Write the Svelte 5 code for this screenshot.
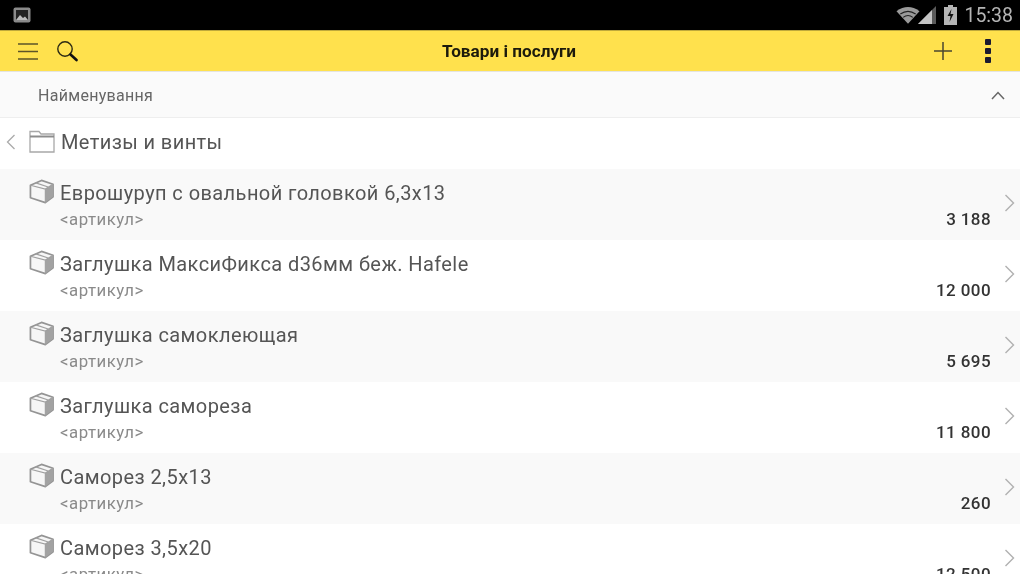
<script lang="ts">
  const items = [
    { name: 'Еврошуруп с овальной головкой 6,3х13', qty: '3 188' },
    { name: 'Заглушка МаксиФикса d36мм беж. Hafele', qty: '12 000' },
    { name: 'Заглушка самоклеющая', qty: '5 695' },
    { name: 'Заглушка самореза', qty: '11 800' },
    { name: 'Саморез 2,5х13', qty: '260' },
    { name: 'Саморез 3,5х20', qty: '12 500' }
  ];
</script>

<div class="screen">
  <div class="status">
    <svg class="gallery" width="18" height="16" viewBox="0 0 18 16">
      <rect x="0.5" y="0.5" width="17" height="15" rx="2" fill="#8a8a8a" />
      <rect x="3" y="3" width="12" height="10" fill="#222" />
      <path d="M3 13 L7 8 L10 11 L12 9.5 L15 13 Z" fill="#bbb" />
    </svg>
    <div class="status-right">
      <svg width="24" height="18" viewBox="0 0 25 18">
        <path d="M0.5 5 Q12.5 -3.5 24.5 5 L12.5 18 Z" fill="#9a9a9a" />
        <path d="M4.5 8 Q12.5 2.5 20.5 8" fill="none" stroke="#222" stroke-width="1.2" />
        <path d="M7.5 11.5 Q12.5 7.5 17.5 11.5" fill="none" stroke="#222" stroke-width="1.2" />
      </svg>
      <svg class="signal" width="18" height="18" viewBox="0 0 18 18">
        <path d="M18 0 V18 H0 Z" fill="#5a5a5a" />
        <path d="M14 4 V18 H0 Z" fill="#c4c4c4" />
      </svg>
      <svg class="battery" width="13" height="20" viewBox="0 0 13 20">
        <path d="M4 0 H9 V2 H13 V20 H0 V2 H4 Z" fill="#b5b5b5" />
        <path d="M7.5 4 L3.5 11 H6.5 L5.5 17 L9.5 9 H6.5 Z" fill="#111" />
      </svg>
      <span class="clock">15:38</span>
    </div>
  </div>

  <header class="toolbar">
    <div class="tools">
      <svg width="20" height="19" viewBox="0 0 20 19">
        <path d="M0 2 H20 M0 9.5 H20 M0 17 H20" stroke="#5c5428" stroke-width="1.4" />
      </svg>
      <svg width="22" height="22" viewBox="0 0 22 22">
        <circle cx="9" cy="9" r="7.2" fill="none" stroke="#2c2a14" stroke-width="1.4" />
        <path d="M14.5 14.5 L20.5 20" stroke="#111" stroke-width="2.6" stroke-linecap="round" />
      </svg>
    </div>
    <h1>Товари і послуги</h1>
    <div class="actions">
      <svg width="18" height="18" viewBox="0 0 18 18">
        <path d="M9 0 V18 M0 9 H18" stroke="#4a4630" stroke-width="1.5" />
      </svg>
      <div class="dots"><i></i><i></i><i></i></div>
    </div>
  </header>

  <div class="sort">
    <span>Найменування</span>
    <svg width="14" height="9" viewBox="0 0 14 9">
      <path d="M1 8 L7 1.5 L13 8" fill="none" stroke="#666" stroke-width="1.5" />
    </svg>
  </div>

  <div class="folder">
    <svg class="back" width="10" height="16" viewBox="0 0 10 16">
      <path d="M8.5 1 L1.5 8 L8.5 15" fill="none" stroke="#aaa" stroke-width="1.3" />
    </svg>
    <svg class="folder-icon" width="26" height="23" viewBox="0 0 26 23">
      <path d="M1 22 V1.5 H10 L12 4 H25 V22 Z" fill="#fff" stroke="#a8a8a8" stroke-width="1.3" />
      <path d="M1 6.5 H25" stroke="#8c8c8c" stroke-width="2" />
    </svg>
    <span>Метизы и винты</span>
  </div>

  {#each items as item, i}
    <div class="row" class:shaded={i % 2 === 0}>
      <svg class="box" width="25" height="25" viewBox="0 0 26 25">
        <path d="M1.5 6 L13 1 L25 5 V18 L17 24 L1.5 19 Z" fill="#f6f6f6" stroke="#949494" stroke-width="1.8" stroke-linejoin="round" />
        <path d="M17 10 L25 5 V18 L17 24 Z" fill="#a2a2a2" />
        <path d="M1.5 6 L17 10 L25 5 M17 10 V24 M7 3.5 L20 7.8" fill="none" stroke="#a0a0a0" stroke-width="1.2" />
      </svg>
      <div class="text">
        <div class="name">{item.name}</div>
        <div class="code">&lt;артикул&gt;</div>
      </div>
      <div class="qty">{item.qty}</div>
      <svg class="chevron" width="11" height="18" viewBox="0 0 11 18">
        <path d="M1.5 1 L9.5 9 L1.5 17" fill="none" stroke="#b0b0b0" stroke-width="1.4" />
      </svg>
    </div>
  {/each}
</div>

<style>
  :global(body) {
    margin: 0;
    background: #fff;
    overflow: hidden;
  }
  .screen {
    width: 1020px;
    height: 574px;
    overflow: hidden;
    font-family: Roboto, "Liberation Sans", sans-serif;
    filter: blur(0.4px);
  }
  .status {
    height: 30px;
    background: #000;
    display: flex;
    align-items: center;
    justify-content: space-between;
    padding: 0 7px 0 13px;
  }
  .status-right {
    display: flex;
    align-items: center;
    color: #b5b5b5;
    font-size: 19.5px;
  }
  .signal {
    margin-left: -2px;
    margin-right: 8px;
  }
  .clock {
    margin-left: 7px;
  }
  .toolbar {
    height: 42px;
    background: #ffe14d;
    border-top: 1px solid #bfa93c;
    border-bottom: 1px solid #e4e4e0;
    box-sizing: border-box;
    display: flex;
    align-items: center;
    justify-content: space-between;
    padding: 0 29px 0 18px;
  }
  .tools {
    display: flex;
    align-items: center;
    gap: 18px;
  }
  h1 {
    flex: 1;
    margin: 0;
    padding-left: 6px;
    text-align: center;
    font-size: 17.2px;
    font-weight: 700;
    color: #1c1a0c;
  }
  .actions {
    display: flex;
    align-items: center;
    gap: 33px;
  }
  .dots {
    display: flex;
    flex-direction: column;
    gap: 3px;
  }
  .dots i {
    width: 6px;
    height: 6px;
    background: #1a1a30;
    border-radius: 1px;
  }
  .sort {
    height: 46px;
    background: #fafafa;
    border-bottom: 1px solid #eee;
    box-sizing: border-box;
    display: flex;
    align-items: center;
    justify-content: space-between;
    padding: 1px 15px 0 38px;
    font-size: 16px;
    color: #666;
    letter-spacing: 0.3px;
  }
  .folder {
    height: 51px;
    display: flex;
    align-items: center;
    padding: 0 0 3px 6px;
    box-sizing: border-box;
    font-size: 20px;
    color: #555;
    letter-spacing: 0.4px;
    background: #fff;
  }
  .folder-icon {
    margin: -2px 6px 0 13px;
  }
  .row {
    height: 71px;
    box-sizing: border-box;
    display: flex;
    padding: 10px 5px 0 29px;
    position: relative;
    background: #fff;
  }
  .row.shaded {
    background: #f9f9f9;
  }
  .box {
    margin-right: 6px;
    flex: none;
  }
  .text {
    flex: 1;
    padding-top: 1px;
  }
  .name {
    font-size: 20px;
    line-height: 26px;
    color: #555;
    letter-spacing: 0.42px;
  }
  .code {
    font-size: 16.8px;
    line-height: 27px;
    color: #8a8a8a;
    letter-spacing: 0.5px;
  }
  .qty {
    align-self: flex-start;
    margin-top: 28px;
    font-size: 17px;
    line-height: 24px;
    font-weight: 500;
    color: #333;
    letter-spacing: 0.4px;
  }
  .chevron {
    margin: 15px 0 0 13px;
  }
</style>
